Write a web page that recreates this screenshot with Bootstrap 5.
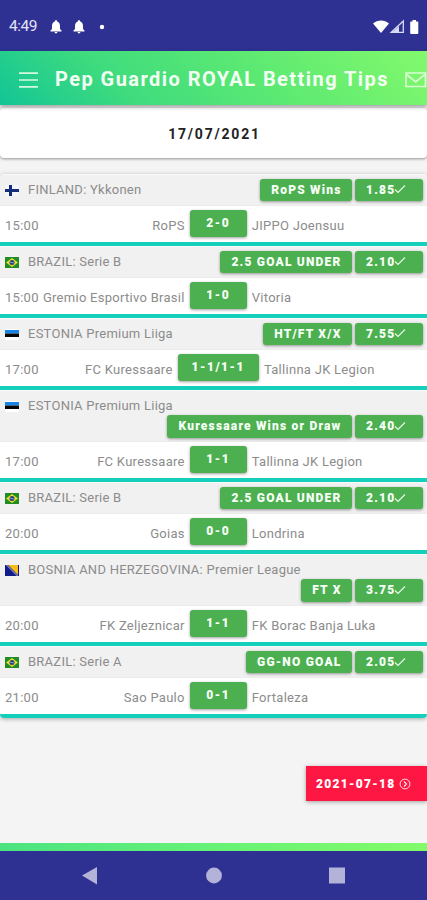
<!DOCTYPE html>
<html lang="en">
<head>
<meta charset="utf-8">
<meta name="viewport" content="width=device-width, initial-scale=1">
<title>Pep Guardio ROYAL Betting Tips</title>
<link href="https://cdn.jsdelivr.net/npm/bootstrap@5.3.0/dist/css/bootstrap.min.css" rel="stylesheet">
<style>
body{font-family:Roboto,"Liberation Sans",sans-serif;background:#f4f4f4;width:427px;height:900px;overflow:hidden}
.statusbar{height:51px;background:#2e3192;color:#e4e4f6;padding:2px 7px 0 9px;font-size:15.5px}
.statusbar .clock{width:41px;letter-spacing:-.5px}
.topbar{height:54px;background:linear-gradient(45deg,#12c596 0%,#3edb7e 28%,#5eea72 62%,#83f96c 100%);padding:3px 0 0 19px;box-shadow:0 2px 4px rgba(0,0,0,.35);z-index:1;position:relative}
.topbar h1{font-size:20px;font-weight:700;letter-spacing:1.45px;color:#f4fff4;margin:-1px 0 0 17px;white-space:nowrap;width:350px}
.datecard{height:50px;margin-top:3px;background:#fff;border-radius:4px;box-shadow:0 1px 3px rgba(0,0,0,.4);font-size:14px;font-weight:700;letter-spacing:1.8px;color:#222;padding:3px 0 0 2px}
.tips{margin-top:16px;border-radius:4px;box-shadow:0 1px 4px rgba(0,0,0,.32);background:#fff;overflow:hidden}
.tip{height:72px;border-bottom:4px solid #14cfb9;color:#8c8c8c;font-size:13px}
.tip.tall{height:92.2px}
.league{height:32px;background:#f1f1f1;border-top:1px solid #fafafa;border-bottom:1px solid #ececec;padding:3.6px 4px 0 5px}
.tall .league{height:52.2px}
.league .title{height:20.5px;line-height:22px;letter-spacing:.25px;white-space:nowrap}
.flag{width:14px;height:11px;margin:6px 9px 0 0}
.pill,.score{background:#4caf50;color:#f6fff6;font-weight:900;border-radius:3px;box-shadow:0 1px 3px rgba(0,0,0,.38);white-space:nowrap}
.pill{height:22.5px;line-height:22px;font-size:12px;letter-spacing:1.2px;padding:0 10px 0 11px}
.odds{width:68px;margin-left:3.5px;padding-right:0}
.odds svg{margin:-2px 0 0 -1px}
.match{height:36px;padding:4px 0 0 5px}
.match .side{flex:1 1 0;line-height:32px;white-space:nowrap;letter-spacing:.28px}
.match .homeside{flex-basis:4.5px}
.score{height:27px;min-width:57px;line-height:26px;font-size:12px;letter-spacing:1.5px;text-align:center;margin:0 5px;padding:0 14px}
.nextday{width:121px;height:35px;margin-top:48px;background:#ff1744;color:#fff;font-weight:900;font-size:12px;letter-spacing:1.3px;padding-left:10px;box-shadow:0 1px 4px rgba(0,0,0,.35)}
.footstrip{height:8px;background:linear-gradient(90deg,#4be381,#66f276 50%,#83fb69);margin-top:auto}
.sysnav{height:49px;background:#2e3192}
</style>
</head>
<body class="d-flex flex-column">
<svg class="d-none" xmlns="http://www.w3.org/2000/svg">
<symbol id="fi" viewBox="0 0 14 11"><path fill="#f4f6fb" d="M0 0h14v11H0z"/><path fill="#142c7c" d="M0 4h14v3H0zM4 0h3v11H4z"/></symbol>
<symbol id="br" viewBox="0 0 14 11"><path fill="#218c21" d="M0 0h14v11H0z"/><path fill="#e6df2c" d="M7 1l6 4.500-6 4.500-6-4.500z"/><circle cx="7" cy="5.500" r="2.500" fill="#243d85"/><path d="M5 5l4 1" stroke="#b9cbe0" stroke-width=".7"/></symbol>
<symbol id="ee" viewBox="0 0 14 11"><path fill="#fff" d="M0 0h14v11H0z"/><path fill="#1785e8" d="M0 1h14v3.500H0z"/><path fill="#060606" d="M0 4.500h14V8H0z"/></symbol>
<symbol id="ba" viewBox="0 0 14 11"><path fill="#101b8c" d="M0 0h14v11H0z"/><path fill="#f3bd1c" d="M3 0h10v10z"/><path d="M1.500 0l11 11" stroke="#d5d8ea" stroke-width=".9"/></symbol>
<symbol id="ck" viewBox="0 0 12 10"><path d="M1 5.500l3 3L11 1.500" fill="none" stroke="#e6f7e6" stroke-width="1.200"/></symbol>
<symbol id="bell" viewBox="0 0 12 14"><path fill="#fff" d="M6 .3c.8 0 1.200.5 1.200 1.300 2 .6 2.800 2.300 2.800 4.400v3l1.500 1.600v.8H.5v-.8L2 9V6c0-2.100.8-3.800 2.800-4.400C4.800.8 5.200.3 6 .3zM4.600 12h2.800c0 .9-.6 1.400-1.400 1.400S4.600 12.900 4.600 12z"/></symbol>
</svg>

<header class="statusbar d-flex align-items-center flex-shrink-0">
  <span class="clock">4:49</span>
  <svg width="12" height="14"><use href="#bell"/></svg>
  <svg width="12" height="14" style="margin-left:11px"><use href="#bell"/></svg>
  <svg width="6" height="6" style="margin-left:14px"><circle cx="3" cy="3" r="2.200" fill="#fff"/></svg>
  <svg class="ms-auto" width="47" height="16" viewBox="0 0 47 16"><path fill="#fff" d="M0 4.500C4.500.5 11.500.5 16 4.500l-8 9.500z"/><path d="M18.300 13.300L30.300 2v11.300z" fill="none" stroke="#d9dbf2" stroke-width="1.300"/><path fill="#d9dbf2" d="M19 13.500l7-6.500v6.500z"/><path fill="#fff" d="M39.500 1h3.500v1.500h1.500q.8 0 .8.800V14q0 1-.9 1h-6.300q-.9 0-.9-1V3.300q0-.8.8-.8h1.500z"/></svg>
</header>

<nav class="topbar d-flex align-items-center flex-shrink-0">
  <svg class="flex-shrink-0" width="19" height="16"><path d="M0 1.200h19M0 8h19M0 14.800h19" stroke="#d5fae0" stroke-width="1.700"/></svg>
  <h1 class="flex-shrink-0">Pep Guardio ROYAL Betting Tips</h1>
  <svg class="flex-shrink-0" width="22" height="16" viewBox="0 0 22 16"><path d="M1 1h19.500v13.500H1zM1 2l9.700 8 9.800-8" fill="none" stroke="#d8ffd4" stroke-width="1.700"/></svg>
</nav>

<div class="datecard d-flex justify-content-center align-items-center flex-shrink-0">17/07/2021</div>

<main class="tips flex-shrink-0">
  <section class="tip">
    <div class="league d-flex"><svg class="flag"><use href="#fi"/></svg><span class="title">FINLAND: Ykkonen</span><span class="pill ms-auto">RoPS Wins</span><span class="pill odds">1.85<svg width="12" height="10"><use href="#ck"/></svg></span></div>
    <div class="match d-flex"><div class="side homeside d-flex justify-content-between"><span>15:00</span><span>RoPS</span></div><div class="score">2-0</div><div class="side awayside">JIPPO Joensuu</div></div>
  </section>
  <section class="tip">
    <div class="league d-flex"><svg class="flag"><use href="#br"/></svg><span class="title">BRAZIL: Serie B</span><span class="pill ms-auto">2.5 GOAL UNDER</span><span class="pill odds">2.10<svg width="12" height="10"><use href="#ck"/></svg></span></div>
    <div class="match d-flex"><div class="side homeside d-flex justify-content-between"><span>15:00</span><span>Gremio Esportivo Brasil</span></div><div class="score">1-0</div><div class="side awayside">Vitoria</div></div>
  </section>
  <section class="tip">
    <div class="league d-flex"><svg class="flag"><use href="#ee"/></svg><span class="title">ESTONIA Premium Liiga</span><span class="pill ms-auto">HT/FT X/X</span><span class="pill odds">7.55<svg width="12" height="10"><use href="#ck"/></svg></span></div>
    <div class="match d-flex"><div class="side homeside d-flex justify-content-between"><span>17:00</span><span>FC Kuressaare</span></div><div class="score">1-1/1-1</div><div class="side awayside">Tallinna JK Legion</div></div>
  </section>
  <section class="tip tall">
    <div class="league"><div class="d-flex"><svg class="flag"><use href="#ee"/></svg><span class="title">ESTONIA Premium Liiga</span></div><div class="d-flex justify-content-end"><span class="pill">Kuressaare Wins or Draw</span><span class="pill odds">2.40<svg width="12" height="10"><use href="#ck"/></svg></span></div></div>
    <div class="match d-flex"><div class="side homeside d-flex justify-content-between"><span>17:00</span><span>FC Kuressaare</span></div><div class="score">1-1</div><div class="side awayside">Tallinna JK Legion</div></div>
  </section>
  <section class="tip">
    <div class="league d-flex"><svg class="flag"><use href="#br"/></svg><span class="title">BRAZIL: Serie B</span><span class="pill ms-auto">2.5 GOAL UNDER</span><span class="pill odds">2.10<svg width="12" height="10"><use href="#ck"/></svg></span></div>
    <div class="match d-flex"><div class="side homeside d-flex justify-content-between"><span>20:00</span><span>Goias</span></div><div class="score">0-0</div><div class="side awayside">Londrina</div></div>
  </section>
  <section class="tip tall">
    <div class="league"><div class="d-flex"><svg class="flag"><use href="#ba"/></svg><span class="title">BOSNIA AND HERZEGOVINA: Premier League</span></div><div class="d-flex justify-content-end"><span class="pill">FT X</span><span class="pill odds">3.75<svg width="12" height="10"><use href="#ck"/></svg></span></div></div>
    <div class="match d-flex"><div class="side homeside d-flex justify-content-between"><span>20:00</span><span>FK Zeljeznicar</span></div><div class="score">1-1</div><div class="side awayside">FK Borac Banja Luka</div></div>
  </section>
  <section class="tip">
    <div class="league d-flex"><svg class="flag"><use href="#br"/></svg><span class="title">BRAZIL: Serie A</span><span class="pill ms-auto">GG-NO GOAL</span><span class="pill odds">2.05<svg width="12" height="10"><use href="#ck"/></svg></span></div>
    <div class="match d-flex"><div class="side homeside d-flex justify-content-between"><span>21:00</span><span>Sao Paulo</span></div><div class="score">0-1</div><div class="side awayside">Fortaleza</div></div>
  </section>
</main>

<div class="nextday d-flex align-items-center align-self-end flex-shrink-0">2021-07-18
  <svg class="ms-1" width="12" height="12" viewBox="0 0 12 12" fill="none" stroke="#ffe0e6"><circle cx="6" cy="6" r="4.900"/><path d="M5 3.500L7.500 6 5 8.500" stroke-width="1.200"/></svg>
</div>

<div class="footstrip flex-shrink-0"></div>
<footer class="sysnav flex-shrink-0"><svg width="427" height="49" fill="#b3b2d9"><path d="M82 24.500L97 16v17.500z"/><circle cx="214" cy="24.500" r="7.900"/><path d="M329 16.500h16v16h-16z"/></svg></footer>
<script src="https://cdn.jsdelivr.net/npm/bootstrap@5.3.0/dist/js/bootstrap.bundle.min.js"></script>
</body>
</html>
